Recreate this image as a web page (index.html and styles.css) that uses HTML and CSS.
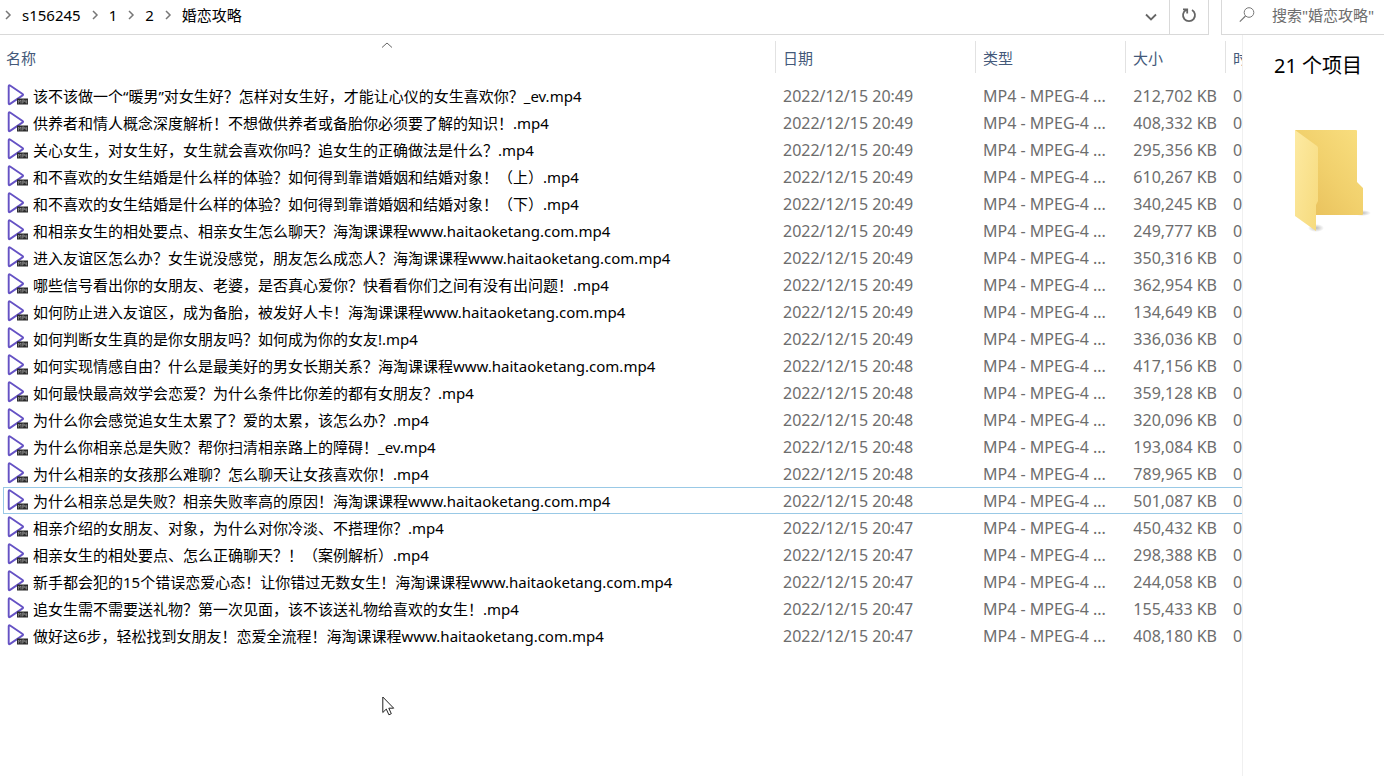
FILE: index.html
```html
<!DOCTYPE html>
<html lang="zh-CN">
<head>
    <meta charset="UTF-8">
    <meta name="viewport" content="width=device-width, initial-scale=1.0">
    <title>婚恋攻略</title>
    <link rel="stylesheet" href="styles.css">
</head>
<body>
    <svg width="0" height="0" class="sprite" aria-hidden="true">
        <symbol id="mp4" viewBox="0 0 21 22">
            <path d="M1.700 2.200v17q0 1.500 1.400.7L15.600 11.400q1-.7 0-1.400L3.100 1.500q-1.400-.8-1.400.7z" fill="#fff" stroke="#6552c4" stroke-width="1.900"/>
            <rect x="10" y="14.500" width="11" height="6" fill="#2b2b2b"/>
            <path d="M11.500 19.500v-3.500l1.200 1.500 1.200-1.500v3.500M15.300 19.500v-3.500h1.700v2h-1.500M18 16v2h2M19.700 16v3.500" fill="none" stroke="#aaa" stroke-width=".6"/>
        </symbol>
        <symbol id="sep" viewBox="0 0 8 10">
            <path d="M2 1l4 4-4 4" fill="none" stroke="#777" stroke-width="1.500"/>
        </symbol>
    </svg>

    <header class="toolbar">
        <nav class="address">
            <svg class="sep"><use href="#sep"/></svg>
            <a href="#">s156245</a>
            <svg class="sep"><use href="#sep"/></svg>
            <a href="#">1</a>
            <svg class="sep"><use href="#sep"/></svg>
            <a href="#">2</a>
            <svg class="sep"><use href="#sep"/></svg>
            <a href="#">婚恋攻略</a>
            <button type="button" class="history" aria-label="历史记录">
                <svg width="12" height="8" viewBox="0 0 12 8"><path d="M1 1.500l5 5 5-5" fill="none" stroke="#666" stroke-width="1.800"/></svg>
            </button>
            <button type="button" class="refresh" aria-label="刷新">
                <svg width="16" height="16" viewBox="0 0 16 16"><path d="M11 3A6 6 0 1 1 5 3M2 2.300h4.200v4.200" fill="none" stroke="#666" stroke-width="1.800"/></svg>
            </button>
        </nav>
        <form class="search">
            <svg width="16" height="16" viewBox="0 0 16 16"><circle cx="10" cy="5.500" r="4.800" fill="none" stroke="#777"/><path d="M6.500 9L.8 14.700" stroke="#777" stroke-width="1.200"/></svg>
            <input type="text" placeholder='搜索"婚恋攻略"' aria-label="搜索">
        </form>
    </header>

    <main class="content">
        <div class="list">
            <table class="files">
                <colgroup>
                    <col class="col-name">
                    <col class="col-date">
                    <col class="col-type">
                    <col class="col-size">
                    <col class="col-time">
                </colgroup>
                <thead>
                    <tr>
                        <th><button type="button">名称</button><svg class="sorted" width="12" height="6" viewBox="0 0 12 6"><path d="M1 5.500l5-4.500 5 4.500" fill="none" stroke="#666"/></svg></th>
                        <th><button type="button">日期</button></th>
                        <th><button type="button">类型</button></th>
                        <th><button type="button">大小</button></th>
                        <th><button type="button">时</button></th>
                    </tr>
                </thead>
                <tbody>
                    <tr><td><svg class="icon"><use href="#mp4"/></svg>该不该做一个“暖男”对女生好？怎样对女生好，才能让心仪的女生喜欢你？_ev.mp4</td><td>2022/12/15 20:49</td><td>MP4 - MPEG-4 ...</td><td>212,702 KB</td><td>0</td></tr>
                    <tr><td><svg class="icon"><use href="#mp4"/></svg>供养者和情人概念深度解析！不想做供养者或备胎你必须要了解的知识！.mp4</td><td>2022/12/15 20:49</td><td>MP4 - MPEG-4 ...</td><td>408,332 KB</td><td>0</td></tr>
                    <tr><td><svg class="icon"><use href="#mp4"/></svg>关心女生，对女生好，女生就会喜欢你吗？追女生的正确做法是什么？.mp4</td><td>2022/12/15 20:49</td><td>MP4 - MPEG-4 ...</td><td>295,356 KB</td><td>0</td></tr>
                    <tr><td><svg class="icon"><use href="#mp4"/></svg>和不喜欢的女生结婚是什么样的体验？如何得到靠谱婚姻和结婚对象！（上）.mp4</td><td>2022/12/15 20:49</td><td>MP4 - MPEG-4 ...</td><td>610,267 KB</td><td>0</td></tr>
                    <tr><td><svg class="icon"><use href="#mp4"/></svg>和不喜欢的女生结婚是什么样的体验？如何得到靠谱婚姻和结婚对象！（下）.mp4</td><td>2022/12/15 20:49</td><td>MP4 - MPEG-4 ...</td><td>340,245 KB</td><td>0</td></tr>
                    <tr><td><svg class="icon"><use href="#mp4"/></svg>和相亲女生的相处要点、相亲女生怎么聊天？海淘课课程www.haitaoketang.com.mp4</td><td>2022/12/15 20:49</td><td>MP4 - MPEG-4 ...</td><td>249,777 KB</td><td>0</td></tr>
                    <tr><td><svg class="icon"><use href="#mp4"/></svg>进入友谊区怎么办？女生说没感觉，朋友怎么成恋人？海淘课课程www.haitaoketang.com.mp4</td><td>2022/12/15 20:49</td><td>MP4 - MPEG-4 ...</td><td>350,316 KB</td><td>0</td></tr>
                    <tr><td><svg class="icon"><use href="#mp4"/></svg>哪些信号看出你的女朋友、老婆，是否真心爱你？快看看你们之间有没有出问题！.mp4</td><td>2022/12/15 20:49</td><td>MP4 - MPEG-4 ...</td><td>362,954 KB</td><td>0</td></tr>
                    <tr><td><svg class="icon"><use href="#mp4"/></svg>如何防止进入友谊区，成为备胎，被发好人卡！海淘课课程www.haitaoketang.com.mp4</td><td>2022/12/15 20:49</td><td>MP4 - MPEG-4 ...</td><td>134,649 KB</td><td>0</td></tr>
                    <tr><td><svg class="icon"><use href="#mp4"/></svg>如何判断女生真的是你女朋友吗？如何成为你的女友!.mp4</td><td>2022/12/15 20:49</td><td>MP4 - MPEG-4 ...</td><td>336,036 KB</td><td>0</td></tr>
                    <tr><td><svg class="icon"><use href="#mp4"/></svg>如何实现情感自由？什么是最美好的男女长期关系？海淘课课程www.haitaoketang.com.mp4</td><td>2022/12/15 20:48</td><td>MP4 - MPEG-4 ...</td><td>417,156 KB</td><td>0</td></tr>
                    <tr><td><svg class="icon"><use href="#mp4"/></svg>如何最快最高效学会恋爱？为什么条件比你差的都有女朋友？.mp4</td><td>2022/12/15 20:48</td><td>MP4 - MPEG-4 ...</td><td>359,128 KB</td><td>0</td></tr>
                    <tr><td><svg class="icon"><use href="#mp4"/></svg>为什么你会感觉追女生太累了？爱的太累，该怎么办？.mp4</td><td>2022/12/15 20:48</td><td>MP4 - MPEG-4 ...</td><td>320,096 KB</td><td>0</td></tr>
                    <tr><td><svg class="icon"><use href="#mp4"/></svg>为什么你相亲总是失败？帮你扫清相亲路上的障碍！_ev.mp4</td><td>2022/12/15 20:48</td><td>MP4 - MPEG-4 ...</td><td>193,084 KB</td><td>0</td></tr>
                    <tr><td><svg class="icon"><use href="#mp4"/></svg>为什么相亲的女孩那么难聊？怎么聊天让女孩喜欢你！.mp4</td><td>2022/12/15 20:48</td><td>MP4 - MPEG-4 ...</td><td>789,965 KB</td><td>0</td></tr>
                    <tr class="focused"><td><svg class="icon"><use href="#mp4"/></svg>为什么相亲总是失败？相亲失败率高的原因！海淘课课程www.haitaoketang.com.mp4</td><td>2022/12/15 20:48</td><td>MP4 - MPEG-4 ...</td><td>501,087 KB</td><td>0</td></tr>
                    <tr><td><svg class="icon"><use href="#mp4"/></svg>相亲介绍的女朋友、对象，为什么对你冷淡、不搭理你？.mp4</td><td>2022/12/15 20:47</td><td>MP4 - MPEG-4 ...</td><td>450,432 KB</td><td>0</td></tr>
                    <tr><td><svg class="icon"><use href="#mp4"/></svg>相亲女生的相处要点、怎么正确聊天？！（案例解析）.mp4</td><td>2022/12/15 20:47</td><td>MP4 - MPEG-4 ...</td><td>298,388 KB</td><td>0</td></tr>
                    <tr><td><svg class="icon"><use href="#mp4"/></svg>新手都会犯的15个错误恋爱心态！让你错过无数女生！海淘课课程www.haitaoketang.com.mp4</td><td>2022/12/15 20:47</td><td>MP4 - MPEG-4 ...</td><td>244,058 KB</td><td>0</td></tr>
                    <tr><td><svg class="icon"><use href="#mp4"/></svg>追女生需不需要送礼物？第一次见面，该不该送礼物给喜欢的女生！.mp4</td><td>2022/12/15 20:47</td><td>MP4 - MPEG-4 ...</td><td>155,433 KB</td><td>0</td></tr>
                    <tr><td><svg class="icon"><use href="#mp4"/></svg>做好这6步，轻松找到女朋友！恋爱全流程！海淘课课程www.haitaoketang.com.mp4</td><td>2022/12/15 20:47</td><td>MP4 - MPEG-4 ...</td><td>408,180 KB</td><td>0</td></tr>
                </tbody>
            </table>
        </div>

        <aside class="preview">
            <h2>21 个项目</h2>
            <svg class="folder" width="80" height="106" viewBox="0 0 80 106">
                <defs>
                    <linearGradient id="back" x1="0" y1="1" x2="1" y2="0">
                        <stop offset="0" stop-color="#e6bd58"/>
                        <stop offset=".5" stop-color="#f1d06c"/>
                        <stop offset="1" stop-color="#f9df80"/>
                    </linearGradient>
                    <linearGradient id="front" x1="0" y1="0" x2="1" y2="1">
                        <stop offset="0" stop-color="#fdeaa2"/>
                        <stop offset="1" stop-color="#f6da7c"/>
                    </linearGradient>
                    <radialGradient id="shade">
                        <stop offset="0" stop-color="#bbb"/>
                        <stop offset="1" stop-color="#fff"/>
                    </radialGradient>
                </defs>
                <ellipse cx="68" cy="85" rx="9" ry="3" fill="url(#shade)"/>
                <ellipse cx="22" cy="100" rx="8" ry="4" fill="url(#shade)"/>
                <path d="M1 2h61q1 0 1 1v51l6 6v26q0 1-1 1H22z" fill="url(#back)"/>
                <path d="M1 2l22 16q1 1 1 2v53l-2 4v26L1 88z" fill="url(#front)"/>
            </svg>
        </aside>
    </main>

    <svg class="pointer" width="13" height="20" viewBox="0 0 13 20"><path d="M.8 1v15.500l3.500-3.400 2.600 5.700 2.400-1.100-2.500-5.500h4.900z" fill="#fff" stroke="#222"/></svg>
</body>
</html>
```
FILE: styles.css
```css
* {
    box-sizing: border-box;
}
body {
    margin: 0;
    min-height: 100vh;
    display: flex;
    flex-direction: column;
    background: #fff;
    color: #000;
    font-family: "Noto Sans", "Noto Sans CJK SC", sans-serif;
    font-size: 15px;
    line-height: 20px;
    text-spacing-trim: space-all;
    overflow: hidden;
}
.sprite {
    position: absolute;
}
button,
input {
    font: inherit;
    color: inherit;
    border: none;
    background: none;
    padding: 0;
}

/* address bar and search */
.toolbar {
    display: flex;
    gap: 12px;
    height: 35px;
}
.address,
.search {
    display: flex;
    align-items: center;
    border-bottom: 1px solid #d9d9d9;
    padding-bottom: 4px;
}
.address {
    flex: 1;
    gap: 10px;
    padding-left: 4px;
    border-right: 1px solid #d9d9d9;
}
.address a {
    color: #000;
    text-decoration: none;
}
.sep {
    width: 8px;
    height: 10px;
}
.history {
    margin-left: auto;
    width: 16px;
}
.refresh {
    display: flex;
    align-items: center;
    justify-content: center;
    align-self: stretch;
    width: 39px;
    margin-bottom: -4px;
    padding-bottom: 4px;
    border-left: 1px solid #d9d9d9;
}
.search {
    width: 163px;
    gap: 17px;
    padding-left: 17px;
    border-left: 1px solid #d9d9d9;
}
.search svg {
    flex: none;
}
.search input {
    flex: 1;
    min-width: 0;
    outline: none;
}
.search input::placeholder {
    color: #6d6d6d;
}

/* file list */
.content {
    flex: 1;
    display: flex;
}
.list {
    flex: 1;
    min-width: 0;
    padding-left: 3px;
    overflow: hidden;
    border-right: 1px solid #f0f0f0;
}
.files {
    width: 100%;
    table-layout: fixed;
    border-collapse: separate;
    border-spacing: 0;
}
.col-date {
    width: 200px;
}
.col-type {
    width: 150px;
}
.col-size {
    width: 100px;
}
.col-time {
    width: 17px;
}
th {
    position: relative;
    height: 47px;
    padding: 6px 0 9px;
    text-align: left;
    font-weight: normal;
    color: #44597a;
    overflow: hidden;
}
th button {
    display: block;
    width: 100%;
    height: 32px;
    padding: 2px 0 0 7px;
    text-align: left;
    white-space: nowrap;
    overflow: hidden;
    border-left: 1px solid #e2e2e2;
}
th:first-child button {
    padding-left: 3px;
    border-left: none;
}
.sorted {
    position: absolute;
    top: 7px;
    left: calc(50% - 8px);
}
td {
    height: 27px;
    padding: 1px 0 0 8px;
    font-size: 16px;
    line-height: 24px;
    color: #6d6d6d;
    white-space: nowrap;
    overflow: hidden;
    border: solid transparent;
    border-width: 1px 0;
}
td:first-child {
    padding-left: 3px;
    font-size: 15px;
    color: #000;
    border-left-width: 1px;
}
td:nth-child(4) {
    padding: 1px 8px 0 0;
    text-align: right;
}
.icon {
    width: 21px;
    height: 22px;
    margin-right: 5px;
    vertical-align: top;
}
.focused td {
    border-color: #99c9e6;
}

/* details pane */
.preview {
    width: 141px;
    padding: 18px 0 0 31px;
}
.preview h2 {
    margin: 0;
    font-size: 20px;
    line-height: 26px;
    font-weight: normal;
    white-space: nowrap;
}
.folder {
    display: block;
    margin: 49px 0 0 20px;
}

.pointer {
    position: absolute;
    left: 382px;
    top: 696px;
}
```
